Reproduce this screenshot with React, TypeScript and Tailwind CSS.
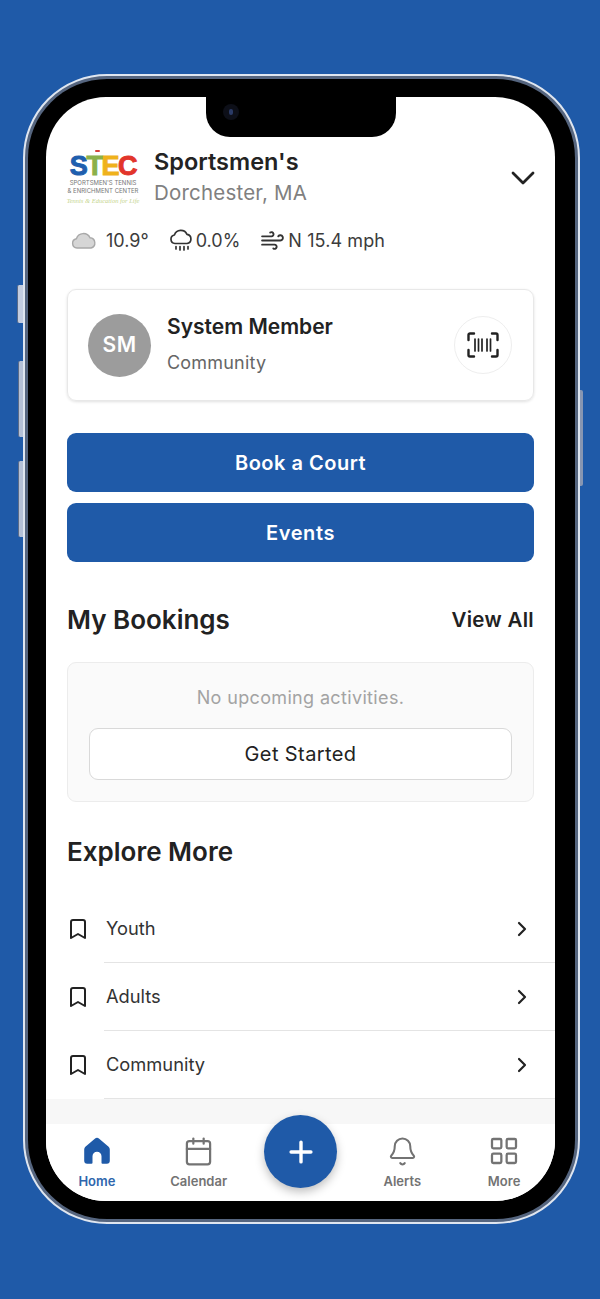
import { Bell, Bookmark, Calendar, ChevronRight, LayoutGrid, Plus, Wind } from 'lucide-react';

const font = { fontFamily: 'Inter, sans-serif' };
const exploreRows = ['Youth', 'Adults', 'Community'];

function StecLogo() {
  return (
    <div className="relative w-[68px] h-[58px] shrink-0 flex flex-col items-center">
      <div className="flex font-['Liberation_Sans',sans-serif] font-bold text-[27px] leading-[27px] mt-[3px] tracking-[-1.4px] [-webkit-text-stroke:1px]">
        <span className="text-[#1f5fae]">S</span>
        <span className="text-[#8bb04a]">T</span>
        <span className="text-[#efb21c]">E</span>
        <span className="text-[#e2352b]">C</span>
      </div>
      <div className="absolute left-[26px] top-0 w-[5px] h-[2px] rounded-full bg-[#d8403a]" />
      <div className="text-[6px] leading-[7px] text-[#777] whitespace-nowrap mt-[-1px] text-center">SPORTSMEN'S TENNIS</div>
      <div className="text-[6px] leading-[7px] text-[#777] whitespace-nowrap text-center mt-[1px]">&amp; ENRICHMENT CENTER</div>
      <div className="text-[6.5px] leading-[10px] text-[#c5d58e] italic whitespace-nowrap text-center mt-[2px] font-['Liberation_Serif',serif]">Tennis &amp; Education for Life</div>
    </div>
  );
}

function ScanIcon() {
  return (
    <svg width="32" height="26" viewBox="0 0 32 26" fill="none" stroke="#222" strokeWidth="2.4" strokeLinecap="round" strokeLinejoin="round">
      <path d="M7 1.500H3a1.500 1.500 0 0 0-1.500 1.500v5M25 1.500h4a1.500 1.500 0 0 1 1.500 1.500v5M7 24.500H3a1.500 1.500 0 0 1-1.500-1.500v-5M25 24.500h4a1.500 1.500 0 0 0 1.500-1.500v-5" />
      <path strokeWidth="1.7" d="M8 7v12M11.500 7v12M15 7v12M20 7v12M23.500 7v12" />
    </svg>
  );
}

function RainIcon() {
  return (
    <svg width="24" height="24" viewBox="0 0 24 24" fill="none" stroke="#333" strokeWidth="1.7" strokeLinecap="round" strokeLinejoin="round">
      <path d="M6 15.500a4.300 4.300 0 0 1-.6-8.500A6.800 6.800 0 0 1 18 6.400a4.600 4.600 0 0 1 0 9.100z" />
      <path d="M7 18.500v2.500M11 18.500v3.500M15 18.500v3.500M19 18.500v2.500" />
    </svg>
  );
}

function HomeIcon() {
  return (
    <svg width="28" height="28" viewBox="0 0 28 28" fill="#1f5aa8">
      <path d="M11.800 1.800a3.400 3.400 0 0 1 4.400 0l9.400 8a3.400 3.400 0 0 1 1.200 2.600v11.400a3 3 0 0 1-3 3h-4.300a1 1 0 0 1-1-1v-6.600a4.500 4.500 0 0 0-9 0v6.600a1 1 0 0 1-1 1H4.200a3 3 0 0 1-3-3V12.400a3.400 3.400 0 0 1 1.200-2.600z" />
    </svg>
  );
}

function TabItem({ label, active, children }: { label: string; active?: boolean; children: React.ReactNode }) {
  return (
    <div className="w-[102px] flex flex-col items-center">
      <div className="h-[32px] flex items-center justify-center">{children}</div>
      <span className={`text-[13px] leading-[16px] mt-[6px] font-semibold ${active ? 'text-[#2f66ad]' : 'text-[#737373]'}`}>{label}</span>
    </div>
  );
}

export default function App() {
  return (
    <div style={font} className="w-[600px] h-[1299px] bg-[#1f5aa8] pt-[74px] pl-[23px] overflow-hidden">
      <div className="relative w-[557px] h-[1150px] rounded-[84px] border-[2px] border-[#dfe6f0] bg-[#55657f] p-[3px]">
        {/* side buttons */}
        <div className="absolute left-[-8px] top-[209px] w-[6px] h-[38px] bg-[#c3cde0] rounded-l-[2px] border-l border-[#5c6c88]" />
        <div className="absolute left-[-7px] top-[285px] w-[5px] h-[76px] bg-[#b4c0d6] rounded-l-[2px] border-l border-[#5c6c88]" />
        <div className="absolute left-[-7px] top-[385px] w-[5px] h-[76px] bg-[#b4c0d6] rounded-l-[2px] border-l border-[#5c6c88]" />
        <div className="absolute right-[-5px] top-[314px] w-[3px] h-[96px] bg-[#8796b2] rounded-r-[2px]" />

        <div className="w-full h-full bg-black rounded-[79px] p-[18px]">
          <div className="relative w-[509px] h-[1104px] bg-white rounded-[60px] overflow-hidden flex flex-col">
            {/* notch */}
            <div className="absolute left-[160px] top-0 w-[190px] h-[40px] bg-black rounded-b-[24px] z-10" />
            <div className="absolute left-[177px] top-[7px] w-[16px] h-[16px] rounded-full bg-[#0d0f18] z-20 flex items-center justify-center">
              <div className="w-[4px] h-[6px] rounded-full bg-[#2a3a66]" />
            </div>

            <div className="flex-1 min-h-0 pt-[53px]">
              <div className="flex items-center pl-[23px] pr-[20px]">
                <StecLogo />
                <div className="ml-[17px] flex-1 -mt-[4px]">
                  <div className="text-[23.500px] leading-[30px] font-semibold text-[#232323]">Sportsmen's</div>
                  <div className="text-[20.500px] leading-[30px] tracking-[0.2px] text-[#808080] mt-[1px]">Dorchester, MA</div>
                </div>
                <svg width="24" height="14" viewBox="0 0 24 14" fill="none" stroke="#222" strokeWidth="2.8" strokeLinecap="round" strokeLinejoin="round" className="mb-[2px]">
                  <path d="M2 2l10 10L22 2" />
                </svg>
              </div>

              <div className="flex items-center pl-[25px] mt-[18px] h-[28px] text-[18px] text-[#3c3c3c]">
                <svg width="26" height="18" viewBox="0 0 26 18" fill="#d6d6d6" stroke="#a9a9a9" strokeWidth="1.4">
                  <path d="M6 17a4.700 4.700 0 0 1-.6-9.300A7.300 7.300 0 0 1 19 6.800 5.200 5.200 0 0 1 20 17z" />
                </svg>
                <span className="ml-[9px]">10.9°</span>
                <span className="ml-[20px] flex"><RainIcon /></span>
                <span className="ml-[3px]">0.0%</span>
                <Wind size={25} strokeWidth={1.8} color="#333" className="ml-[20px]" />
                <span className="ml-[3px] tracking-[0.1px]">N 15.4 mph</span>
              </div>

              <div className="mx-[21px] mt-[35px] h-[112px] rounded-[9px] border border-[#e8e8e8] shadow-[0_1px_3px_rgba(0,0,0,0.12)] flex items-center pl-[20px] pr-[21px]">
                <div className="w-[63px] h-[63px] rounded-full bg-[#9c9c9c] flex items-center justify-center text-white text-[21px] font-semibold tracking-[0.5px]">SM</div>
                <div className="ml-[16px] flex-1">
                  <div className="text-[21px] leading-[26px] font-semibold text-[#222]">System Member</div>
                  <div className="text-[18px] leading-[26px] tracking-[0.2px] text-[#666] mt-[10px]">Community</div>
                </div>
                <div className="w-[58px] h-[58px] rounded-full border border-[#eeeeee] flex items-center justify-center">
                  <ScanIcon />
                </div>
              </div>

              <div className="mx-[21px] mt-[32px] flex flex-col gap-[11px]">
                <button className="h-[59px] rounded-[9px] bg-[#1f5aa8] text-white text-[20px] tracking-[0.5px] font-semibold">Book a Court</button>
                <button className="h-[59px] rounded-[9px] bg-[#1f5aa8] text-white text-[20px] tracking-[0.6px] font-semibold">Events</button>
              </div>

              <div className="mx-[21px] mt-[40px] flex items-center justify-between h-[36px]">
                <span className="text-[26px] font-semibold text-[#222] -mt-[2px]">My Bookings</span>
                <span className="text-[20.500px] tracking-[0.3px] font-semibold text-[#222]">View All</span>
              </div>

              <div className="mx-[21px] mt-[24px] h-[140px] rounded-[9px] border border-[#ececec] bg-[#fafafa] px-[21px] pt-[22px]">
                <div className="text-center text-[18px] leading-[26px] tracking-[0.35px] text-[#a3a3a3]">No upcoming activities.</div>
                <button className="mt-[17px] w-full h-[52px] rounded-[9px] border border-[#d9d9d9] bg-white text-[20px] tracking-[0.4px] text-[#222]">Get Started</button>
              </div>

              <div className="mx-[21px] mt-[31px] h-[36px] flex items-center text-[26px] font-semibold text-[#222]">Explore More</div>

              <div className="mt-[26px]">
                {exploreRows.map((row) => (
                  <div key={row} className="h-[68px] flex pl-[20px]">
                    <div className="w-[38px] flex items-center">
                      <Bookmark size={24} strokeWidth={2} color="#222" />
                    </div>
                    <div className="flex-1 flex items-center border-b border-[#e4e4e4] pr-[21px] pt-[1px]">
                      <span className="flex-1 pl-[2px] text-[18.300px] text-[#333]">{row}</span>
                      <ChevronRight size={24} strokeWidth={2.2} color="#222" />
                    </div>
                  </div>
                ))}
              </div>
            </div>

            <div className="h-[25px] bg-[#f7f7f7] shrink-0" />
            <div className="relative h-[77px] bg-white shrink-0 flex pt-[11px] pl-0">
              <TabItem label="Home" active><HomeIcon /></TabItem>
              <TabItem label="Calendar"><Calendar size={31} strokeWidth={1.7} color="#737373" /></TabItem>
              <div className="w-[102px]" />
              <TabItem label="Alerts"><Bell size={31} strokeWidth={1.6} color="#737373" /></TabItem>
              <TabItem label="More"><LayoutGrid size={32} strokeWidth={1.7} color="#737373" /></TabItem>
              <div className="absolute left-[218px] top-[-9px] w-[73px] h-[73px] rounded-full bg-[#1f5aa8] shadow-[0_4px_10px_rgba(0,0,0,0.25)] flex items-center justify-center">
                <Plus size={34} strokeWidth={2.4} color="#fff" />
              </div>
            </div>
          </div>
        </div>
      </div>
    </div>
  );
}
